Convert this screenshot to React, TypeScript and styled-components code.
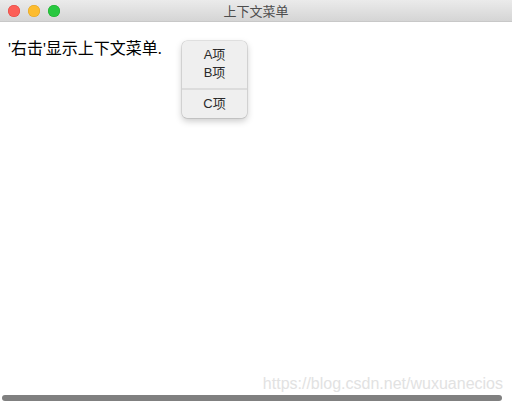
import React from "react";
import styled, { createGlobalStyle } from "styled-components";

const Global = createGlobalStyle`
  html, body { margin: 0; padding: 0; background: #ffffff; }
  body { width: 512px; height: 404px; overflow: hidden; }
`;

const Window = styled.div`
  width: 512px;
  height: 404px;
  display: flex;
  flex-direction: column;
  background: #ffffff;
  position: relative;
  overflow: hidden;
`;

const TitleBar = styled.div`
  height: 22px;
  flex: none;
  display: flex;
  align-items: center;
  position: relative;
  background: linear-gradient(#ebebeb, #d5d5d5);
  border-bottom: 1px solid #c8c8c8;
  box-sizing: border-box;
`;

const Lights = styled.div`
  display: flex;
  gap: 8px;
  padding-left: 8px;
`;

const Light = styled.span<{ $c: string; $b: string }>`
  width: 12px;
  height: 12px;
  border-radius: 50%;
  background: ${(p) => p.$c};
  box-shadow: inset 0 0 0 0.5px ${(p) => p.$b};
`;

const Title = styled.div`
  position: absolute;
  left: 0;
  right: 0;
  top: 0;
  height: 21px;
  line-height: 21px;
  text-align: center;
  font-family: "Noto Sans CJK SC", "Liberation Sans", sans-serif;
  font-size: 13px;
  color: #4d4d4d;
`;

const Content = styled.div`
  flex: 1;
  position: relative;
  padding: 17px 8px 0;
`;

const Label = styled.div`
  font-family: "Liberation Serif", "Noto Sans CJK SC", serif;
  font-size: 16px;
  line-height: 20px;
  color: #000;
`;

const Menu = styled.div`
  position: absolute;
  left: 182px;
  top: 19px;
  width: 65px;
  height: 77px;
  box-sizing: border-box;
  background: #efefef;
  border-radius: 5px;
  box-shadow: 0 0 0 0.5px rgba(0,0,0,0.18), 0 3px 7px rgba(0,0,0,0.22);
  padding: 5px 0;
  display: flex;
  flex-direction: column;
`;

const Item = styled.div`
  height: 18px;
  line-height: 18px;
  text-align: center;
  font-family: "Liberation Sans", "Noto Sans CJK SC", sans-serif;
  font-size: 13px;
  color: #2a2a2a;
`;

const Sep = styled.div`
  height: 2px;
  background: #dcdcdc;
  margin: 6px 0 5px;
`;

const Watermark = styled.div`
  position: absolute;
  right: 9px;
  bottom: 11px;
  font-family: "Liberation Sans", sans-serif;
  font-size: 16px;
  color: #e2e2e2;
`;

const Scrollbar = styled.div`
  position: absolute;
  left: 2px;
  width: 500px;
  bottom: 3px;
  height: 6px;
  border-radius: 3px;
  background: #808080;
`;

export default function App() {
  return (
    <>
      <Global />
      <Window>
        <TitleBar>
          <Lights>
            <Light $c="#fc5f57" $b="#e0443e" />
            <Light $c="#fdbc2e" $b="#dea123" />
            <Light $c="#28c840" $b="#1aab29" />
          </Lights>
          <Title>上下文菜单</Title>
        </TitleBar>
        <Content>
          <Label>'右击'显示上下文菜单.</Label>
          <Menu>
            <Item>A项</Item>
            <Item>B项</Item>
            <Sep />
            <Item>C项</Item>
          </Menu>
        </Content>
        <Watermark>https://blog.csdn.net/wuxuanecios</Watermark>
        <Scrollbar />
      </Window>
    </>
  );
}
